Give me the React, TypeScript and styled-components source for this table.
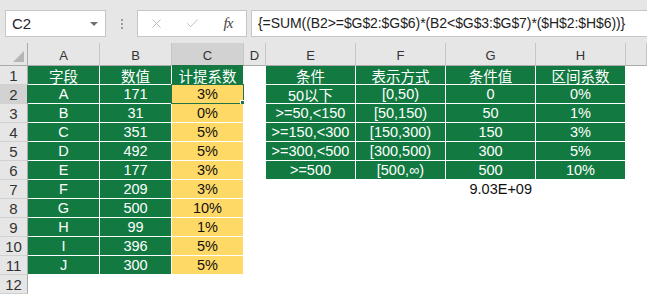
import styled, { createGlobalStyle } from "styled-components";
import { X, Check } from "lucide-react";

const Global = createGlobalStyle`
  body {
    margin: 0;
    background: #ffffff;
    font-family: "Liberation Sans", "Noto Sans CJK SC", sans-serif;
  }
`;

const Page = styled.div`
  width: 647px;
  height: 296px;
  overflow: hidden;
  background: #ffffff;
`;

const FormulaBar = styled.div`
  height: 43px;
  box-sizing: border-box;
  padding: 10px 0 0 5px;
  background: #e6e6e6;
  display: flex;
  align-items: flex-start;
`;

const NameBox = styled.div`
  width: 101px;
  height: 27px;
  box-sizing: border-box;
  border: 1px solid #c6c6c6;
  background: #fff;
  display: flex;
  align-items: center;
  justify-content: space-between;
  padding: 0 7px 0 6px;
  font-size: 15px;
  color: #262626;
`;

const Caret = styled.span`
  width: 0;
  height: 0;
  border-left: 4px solid transparent;
  border-right: 4px solid transparent;
  border-top: 4px solid #707070;
`;

const Grip = styled.div`
  width: 31px;
  height: 27px;
  display: flex;
  flex-direction: column;
  align-items: center;
  justify-content: center;
  gap: 2px;
  span {
    width: 2px;
    height: 2px;
    background: #9a9a9a;
  }
`;

const ActionBox = styled.div`
  width: 110px;
  height: 27px;
  box-sizing: border-box;
  border: 1px solid #c6c6c6;
  background: #fff;
  display: grid;
  grid-template-columns: repeat(3, 36px);
  align-items: center;
  justify-items: center;
  color: #b4b4b4;
`;

const Fx = styled.span`
  font-family: "Liberation Serif", serif;
  font-style: italic;
  font-size: 15px;
  color: #444;
  letter-spacing: -1px;
`;

const FormulaInput = styled.div`
  flex: 1;
  margin-left: 4px;
  height: 27px;
  box-sizing: border-box;
  border: 1px solid #c6c6c6;
  border-right: none;
  background: #fff;
  padding-left: 6px;
  font-size: 14px;
  letter-spacing: -0.08px;
  line-height: 25px;
  color: #222;
  white-space: nowrap;
  overflow: hidden;
`;

const Sheet = styled.div`
  display: grid;
  grid-template-columns: 28px 72px 72px 72px 22px 90px 90px 90px 90px 1fr;
  grid-template-rows: 23px repeat(12, 19px);
`;

const Corner = styled.div`
  background: #e6e6e6;
  border-right: 1px solid #ababab;
  border-bottom: 1px solid #ababab;
  display: flex;
  align-items: flex-end;
  justify-content: flex-end;
  padding: 0 3px 3px 0;
`;

const ColHeader = styled.div<{ $active?: boolean }>`
  background: ${(p) => (p.$active ? "#d2d2d2" : "#e6e6e6")};
  border-right: 1px solid #c6c6c6;
  border-bottom: 1px solid ${(p) => (p.$active ? "#217346" : "#ababab")};
  display: flex;
  align-items: flex-end;
  justify-content: center;
  padding-bottom: 2px;
  font-size: 13px;
  color: #333;
`;

const RowHeader = styled.div<{ $active?: boolean }>`
  background: ${(p) => (p.$active ? "#d2d2d2" : "#e6e6e6")};
  border-right: 1px solid ${(p) => (p.$active ? "#217346" : "#ababab")};
  border-bottom: 1px solid #d0d0d0;
  display: flex;
  align-items: center;
  justify-content: center;
  font-size: 15px;
  color: #333;
`;

type Tone = "green" | "yellow" | "plain";

const Cell = styled.div<{ $tone: Tone; $right?: boolean }>`
  position: relative;
  background: ${(p) =>
    p.$tone === "green" ? "#127a40" : p.$tone === "yellow" ? "#ffd966" : "#fff"};
  color: ${(p) => (p.$tone === "green" ? "#fff" : "#111")};
  border-right: 1px solid #fff;
  border-bottom: 1px solid #fff;
  display: flex;
  align-items: center;
  justify-content: ${(p) => (p.$right ? "flex-end" : "center")};
  padding-right: ${(p) => (p.$right ? "3px" : "0")};
  font-size: 14.5px;
  white-space: nowrap;
`;

const Selection = styled.div`
  position: absolute;
  inset: -1px -1px -1px -1px;
  border: 1px solid #217346;
  pointer-events: none;
`;

const Handle = styled.div`
  position: absolute;
  right: -4px;
  bottom: -4px;
  width: 5px;
  height: 5px;
  background: #217346;
  border: 1px solid #fff;
`;

const cols = ["A", "B", "C", "D", "E", "F", "G", "H", ""];

const left: [string, number, string][] = [
  ["A", 171, "3%"],
  ["B", 31, "0%"],
  ["C", 351, "5%"],
  ["D", 492, "5%"],
  ["E", 177, "3%"],
  ["F", 209, "3%"],
  ["G", 500, "10%"],
  ["H", 99, "1%"],
  ["I", 396, "5%"],
  ["J", 300, "5%"],
];

const rules: string[][] = [
  ["50以下", "[0,50)", "0", "0%"],
  [">=50,<150", "[50,150)", "50", "1%"],
  [">=150,<300", "[150,300)", "150", "3%"],
  [">=300,<500", "[300,500)", "300", "5%"],
  [">=500", "[500,∞)", "500", "10%"],
];

function Row({ n }: { n: number }) {
  // n = sheet row number (1..12)
  const cells: JSX.Element[] = [];
  const d = left[n - 2];
  if (n === 1) {
    cells.push(<Cell key="a" $tone="green">字段</Cell>);
    cells.push(<Cell key="b" $tone="green">数值</Cell>);
    cells.push(<Cell key="c" $tone="green">计提系数</Cell>);
  } else if (d) {
    cells.push(<Cell key="a" $tone="green">{d[0]}</Cell>);
    cells.push(<Cell key="b" $tone="green">{d[1]}</Cell>);
    cells.push(
      <Cell key="c" $tone="yellow">
        {d[2]}
        {n === 2 && (
          <Selection>
            <Handle />
          </Selection>
        )}
      </Cell>
    );
  } else {
    cells.push(<Cell key="a" $tone="plain" />);
    cells.push(<Cell key="b" $tone="plain" />);
    cells.push(<Cell key="c" $tone="plain" />);
  }
  cells.push(<Cell key="d" $tone="plain" />);

  const r = rules[n - 2];
  if (n === 1) {
    ["条件", "表示方式", "条件值", "区间系数"].forEach((t) =>
      cells.push(<Cell key={t} $tone="green">{t}</Cell>)
    );
  } else if (r) {
    r.forEach((t, i) => cells.push(<Cell key={i} $tone="green">{t}</Cell>));
  } else {
    cells.push(<Cell key="e" $tone="plain" />);
    cells.push(<Cell key="f" $tone="plain" />);
    cells.push(
      <Cell key="g" $tone="plain" $right>
        {n === 7 ? "9.03E+09" : ""}
      </Cell>
    );
    cells.push(<Cell key="h" $tone="plain" />);
  }
  cells.push(<Cell key="i" $tone="plain" />);

  return (
    <>
      <RowHeader $active={n === 2}>{n}</RowHeader>
      {cells}
    </>
  );
}

export default function App() {
  return (
    <Page>
      <Global />
      <FormulaBar>
        <NameBox>
          C2
          <Caret />
        </NameBox>
        <Grip>
          <span />
          <span />
          <span />
        </Grip>
        <ActionBox>
          <X size={15} strokeWidth={1.4} />
          <Check size={15} strokeWidth={1.4} />
          <Fx>fx</Fx>
        </ActionBox>
        <FormulaInput>{"{=SUM((B2>=$G$2:$G$6)*(B2<$G$3:$G$7)*($H$2:$H$6))}"}</FormulaInput>
      </FormulaBar>
      <Sheet>
        <Corner>
          <svg width="11" height="11" viewBox="0 0 11 11">
            <polygon points="11,0 11,11 0,11" fill="#b5b5b5" />
          </svg>
        </Corner>
        {cols.map((c, i) => (
          <ColHeader key={i} $active={c === "C"}>
            {c}
          </ColHeader>
        ))}
        {Array.from({ length: 12 }, (_, i) => (
          <Row key={i} n={i + 1} />
        ))}
      </Sheet>
    </Page>
  );
}
